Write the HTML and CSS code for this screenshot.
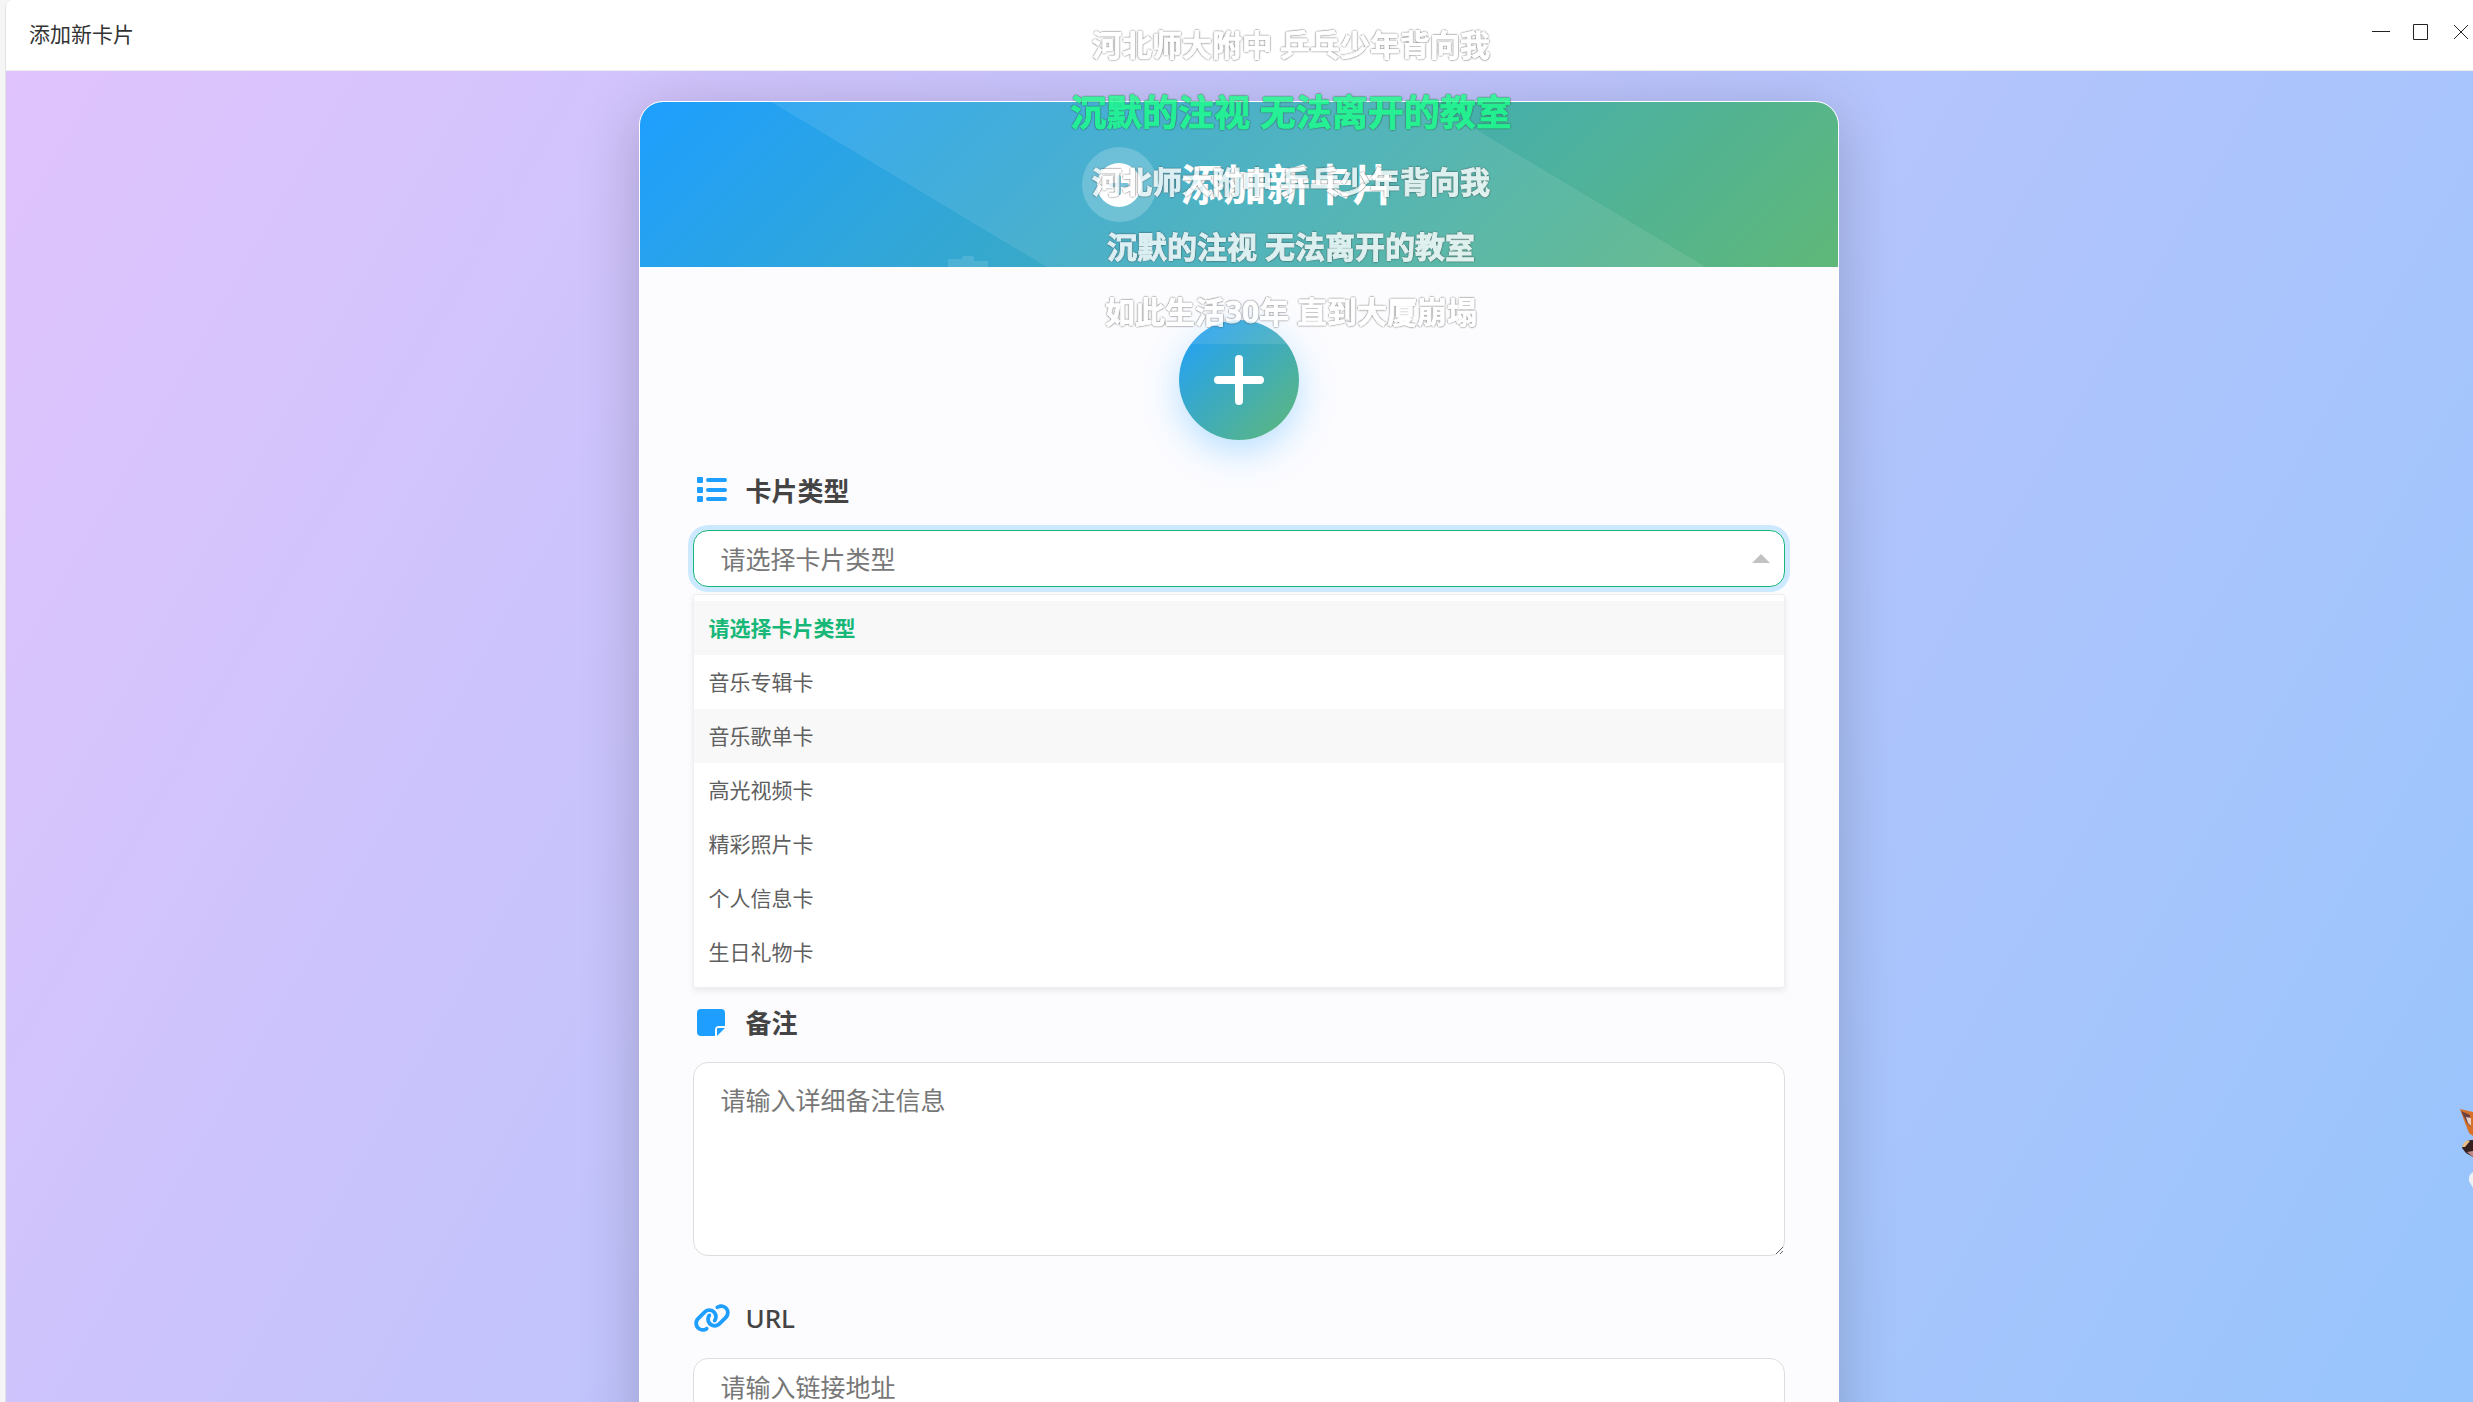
FILE: index.html
```
<!DOCTYPE html>
<html lang="zh-CN">

<head>
  <meta charset="UTF-8">
  <title>添加新卡片</title>
  <link rel="stylesheet" href="styles.css">
</head>

<body>

  <div class="window">
    <!-- 标题栏 -->
    <header class="title-bar">
      <span class="title-bar-text">添加新卡片</span>
      <div class="title-bar-actions">
        <button type="button" class="win-btn" aria-label="最小化">
          <svg viewBox="0 0 18 18"><path d="M0 8.5h18" /></svg>
        </button>
        <button type="button" class="win-btn" aria-label="最大化">
          <svg viewBox="0 0 18 18"><path d="M1.5 1.5h14v15h-14z" /></svg>
        </button>
        <button type="button" class="win-btn" aria-label="关闭">
          <svg viewBox="0 0 18 18"><path d="M2 2l14 14M16 2L2 16" /></svg>
        </button>
      </div>
    </header>

    <main class="page">
      <section class="card">
        <div class="card-header">
          <span class="header-icon">
            <svg viewBox="0 0 44 44">
              <circle cx="22" cy="22" r="22" fill="#fff" />
              <path d="M22 14v16M14 22h16" stroke="#6bbcd6" stroke-width="4" stroke-linecap="round" />
            </svg>
          </span>
          <h1>添加新卡片</h1>
          <svg class="header-decor" viewBox="0 0 40 11">
            <path d="M0 3h14V2q0-2 2-2h8q2 0 2 2v3h14v6H0z" />
          </svg>
        </div>

        <form class="card-body">
          <button type="button" class="add-btn" aria-label="添加">
            <svg viewBox="0 0 50 50"><path d="M25 4v42M4 25h42" /></svg>
          </button>

          <!-- 卡片类型 -->
          <div class="form-group form-group-open">
            <label for="card-type">
              <svg class="label-icon" viewBox="0 0 38 30">
                <rect x="4" y="2" width="6" height="6" rx="1" />
                <rect x="4" y="12" width="6" height="6" rx="1" />
                <rect x="4" y="21" width="6" height="6" rx="1" />
                <rect x="13" y="3" width="21" height="4" rx="2" />
                <rect x="13" y="13" width="21" height="4" rx="2" />
                <rect x="13" y="22" width="21" height="4" rx="2" />
              </svg>
              卡片类型
            </label>
            <div class="select-box">
              <select id="card-type" class="field field-active">
                <option>请选择卡片类型</option>
                <option>音乐专辑卡</option>
                <option>音乐歌单卡</option>
                <option>高光视频卡</option>
                <option>精彩照片卡</option>
                <option>个人信息卡</option>
                <option>生日礼物卡</option>
              </select>
              <span class="select-arrow"></span>
            </div>
            <ul class="select-list" role="listbox" aria-label="卡片类型">
              <li role="option" aria-selected="true" class="selected">请选择卡片类型</li>
              <li role="option">音乐专辑卡</li>
              <li role="option" class="hover">音乐歌单卡</li>
              <li role="option">高光视频卡</li>
              <li role="option">精彩照片卡</li>
              <li role="option">个人信息卡</li>
              <li role="option">生日礼物卡</li>
            </ul>
          </div>

          <!-- 备注 -->
          <div class="form-group">
            <label for="card-remark">
              <svg class="label-icon" viewBox="0 0 38 30">
                <path d="M8 2h20a4 4 0 0 1 4 4v13h-6a4 4 0 0 0-4 4v6H8a4 4 0 0 1-4-4V6a4 4 0 0 1 4-4z" />
                <path d="M25 21h7l-8 8v-7a1 1 0 0 1 1-1z" />
              </svg>
              备注
            </label>
            <textarea id="card-remark" class="field" placeholder="请输入详细备注信息"></textarea>
          </div>

          <!-- URL -->
          <div class="form-group">
            <label for="card-url" class="label-latin">
              <svg class="label-icon" viewBox="0 0 640 512">
                <path d="M579.8 267.7c56.5-56.5 56.5-148 0-204.5c-50-50-128.8-56.5-186.3-15.4l-1.6 1.1c-14.4 10.3-17.7 30.3-7.4 44.6s30.3 17.7 44.6 7.4l1.6-1.1c32.1-22.9 76-19.3 103.8 8.6c31.5 31.5 31.5 82.5 0 114L422.3 334.8c-31.5 31.5-82.5 31.5-114 0c-27.9-27.9-31.5-71.8-8.6-103.8l1.1-1.6c10.3-14.4 6.9-34.4-7.4-44.6s-34.4-6.9-44.6 7.4l-1.1 1.6C206.5 251.2 213 330 263 380c56.5 56.5 148 56.5 204.5 0L579.8 267.7zM60.2 244.3c-56.5 56.5-56.5 148 0 204.5c50 50 128.8 56.5 186.3 15.4l1.6-1.1c14.4-10.3 17.7-30.3 7.4-44.6s-30.3-17.7-44.6-7.4l-1.6 1.1c-32.1 22.9-76 19.3-103.8-8.6C74 372 74 321 105.5 289.5L217.7 177.2c31.5-31.5 82.5-31.5 114 0c27.9 27.9 31.5 71.8 8.6 103.9l-1.1 1.6c-10.3 14.4-6.9 34.4 7.4 44.6s34.4 6.9 44.6-7.4l1.1-1.6C433.5 260.8 427 182 377 132c-56.5-56.5-148-56.5-204.5 0L60.2 244.3z" />
              </svg>
              URL
            </label>
            <input id="card-url" type="text" class="field" placeholder="请输入链接地址">
          </div>
        </form>
      </section>
    </main>
  </div>

  <!-- 桌面歌词 -->
  <div class="lyrics">
    <p>河北师大附中 乒乓少年背向我</p>
    <p class="current">沉默的注视 无法离开的教室</p>
    <p>河北师大附中 乒乓少年背向我</p>
    <p>沉默的注视 无法离开的教室</p>
    <p>如此生活30年 直到大厦崩塌</p>
  </div>

  <!-- 桌面宠物 -->
  <svg class="pet" viewBox="0 0 14 80">
    <path d="M1 0l13 3v24l-4-3-4-10z" fill="#d9702a" />
    <path d="M2 2l9 4 1 12-4-4z" fill="#6b4442" />
    <path d="M7 8l5 1v8l-3-3z" fill="#e8cfc8" />
    <path d="M3 39q3-9 11-8v17l-7-4z" fill="#33201f" />
    <path d="M3 38q3-8 8-6l-5 6z" fill="#e9bd84" />
    <path d="M8 43l6-1v6z" fill="#c08a86" />
    <path d="M14 63q-5 3-4 9l4 7z" fill="#eef0f6" />
  </svg>

</body>

</html>
```
FILE: styles.css
```
* {
  box-sizing: border-box;
}

body {
  margin: 0;
  padding-left: 5px;
  height: 100vh;
  overflow: hidden;
  background: #f5f5f5;
  font-family: "Noto Sans", "Noto Sans CJK SC", sans-serif;
  color: #333;
}

.window {
  display: flex;
  flex-direction: column;
  height: 100vh;
  border-left: 1px solid #e2e2e2;
  border-top-left-radius: 8px;
  overflow: hidden;
  background: #fff;
}

/* 标题栏 */
.title-bar {
  display: flex;
  flex: none;
  align-items: center;
  justify-content: space-between;
  height: 71px;
  padding: 0 3px 4px 23px;
  border-bottom: 1px solid #eee;
  background: #fff;
}

.title-bar-text {
  font-size: 21px;
}

.title-bar-actions {
  display: flex;
  gap: 22px;
  padding-bottom: 2px;
}

.win-btn {
  width: 18px;
  height: 18px;
  padding: 0;
  border: none;
  background: none;
  cursor: pointer;
}

.win-btn svg {
  display: block;
  width: 18px;
  height: 18px;
  fill: none;
  stroke: #222;
}

.page {
  flex: 1;
  padding: 30px 32px 30px 30px;
  overflow: hidden;
  background: linear-gradient(120deg, #e0c3fc 0%, #8ec5fc 112%);
}

/* 卡片 */
.card {
  max-width: 1200px;
  margin: 0 auto;
  border: 1px solid #fff;
  border-radius: 24px;
  overflow: hidden;
  background: #fcfcff;
  box-shadow: 0 12px 60px rgba(0, 0, 0, 0.2);
}

.card-header {
  position: relative;
  display: flex;
  align-items: center;
  justify-content: center;
  gap: 24px;
  height: 165px;
  background: linear-gradient(135deg, #1e9fff, #5fb878);
  color: #fff;
}

/* 斜向高光 */
.card-header::before {
  content: "";
  position: absolute;
  inset: 0;
  background: rgba(255, 255, 255, 0.09);
  clip-path: polygon(11% 0, 66% 0, 89% 100%, 34% 100%);
}

.card-header h1 {
  margin: 0;
  font-size: 43px;
  line-height: 60px;
}

.header-icon {
  display: flex;
  align-items: center;
  justify-content: center;
  width: 75px;
  height: 75px;
  border-radius: 50%;
  background: rgba(255, 255, 255, 0.2);
}

.header-icon svg {
  width: 44px;
  height: 44px;
}

.header-decor {
  position: absolute;
  bottom: 0;
  left: 308px;
  width: 40px;
  height: 11px;
  fill: rgba(255, 255, 255, 0.12);
}

.card-body {
  padding: 53px;
}

.add-btn {
  display: flex;
  align-items: center;
  justify-content: center;
  width: 120px;
  height: 120px;
  margin: 0 auto 30px;
  border: none;
  border-radius: 50%;
  background:
    linear-gradient(rgba(255, 255, 255, 0.1) 24px, transparent 24px),
    linear-gradient(135deg, #1e9fff, #5fb878);
  box-shadow: 0 12px 36px rgba(30, 159, 255, 0.3);
  cursor: pointer;
}

.add-btn svg {
  width: 50px;
  height: 50px;
  fill: none;
  stroke: #fff;
  stroke-width: 8;
  stroke-linecap: round;
}

/* 表单 */
.form-group {
  margin-bottom: 42px;
}

.form-group-open {
  margin-bottom: 14px;
}

.form-group label {
  display: flex;
  align-items: center;
  gap: 15px;
  height: 40px;
  margin-bottom: 20px;
  font-size: 26px;
  font-weight: 600;
  color: #444;
}

.form-group .label-latin {
  font-weight: 500;
}

.label-icon {
  width: 38px;
  height: 30px;
  fill: #1e9fff;
}

.field {
  display: block;
  width: 100%;
  height: 57px;
  padding: 0 27px;
  border: 1px solid #ddd;
  border-radius: 15px;
  outline: none;
  background: #fff;
  font-family: inherit;
  font-size: 25px;
  color: #777;
}

.field::placeholder {
  color: #777;
}

textarea.field {
  height: 194px;
  padding: 18px 27px;
  line-height: 38px;
  resize: vertical;
}

.select-box {
  position: relative;
}

select.field {
  appearance: none;
}

.field-active {
  border-color: #16b777;
  box-shadow: 0 0 0 5px #cce9ff;
}

.select-arrow {
  position: absolute;
  top: 24px;
  right: 15px;
  border: 9px solid transparent;
  border-top: none;
  border-bottom-color: #c2c2c2;
  pointer-events: none;
}

.select-list {
  margin: 7px 0 0;
  padding: 6px 0 8px;
  border: 1px solid #eee;
  border-radius: 3px;
  background: #fff;
  box-shadow: 0 3px 6px rgba(0, 0, 0, 0.08);
  list-style: none;
  font-size: 21px;
  line-height: 54px;
  color: #5f5f5f;
}

.select-list li {
  padding: 0 15px;
}

.select-list .hover {
  background: #f8f8f8;
}

.select-list .selected {
  background: #f8f8f8;
  font-weight: bold;
  color: #16b777;
}

/* 桌面歌词 */
.lyrics {
  position: fixed;
  top: 12px;
  left: 1021px;
  width: 540px;
  text-align: center;
  opacity: 0.8;
  pointer-events: none;
}

.lyrics p {
  margin: 0;
  font-size: 30px;
  font-weight: bold;
  line-height: 65px;
  color: #fff;
  -webkit-text-stroke: 1px currentColor;
  text-shadow: 0 0 2px #333, 0 0 2px #333, 0 0 1px #555, 0 0 1px #555;
}

.lyrics .current {
  font-size: 36px;
  line-height: 72px;
  color: #1cff8a;
}

/* 桌面宠物 */
.pet {
  position: fixed;
  right: 0;
  bottom: 213px;
  width: 14px;
  height: 80px;
}
```
